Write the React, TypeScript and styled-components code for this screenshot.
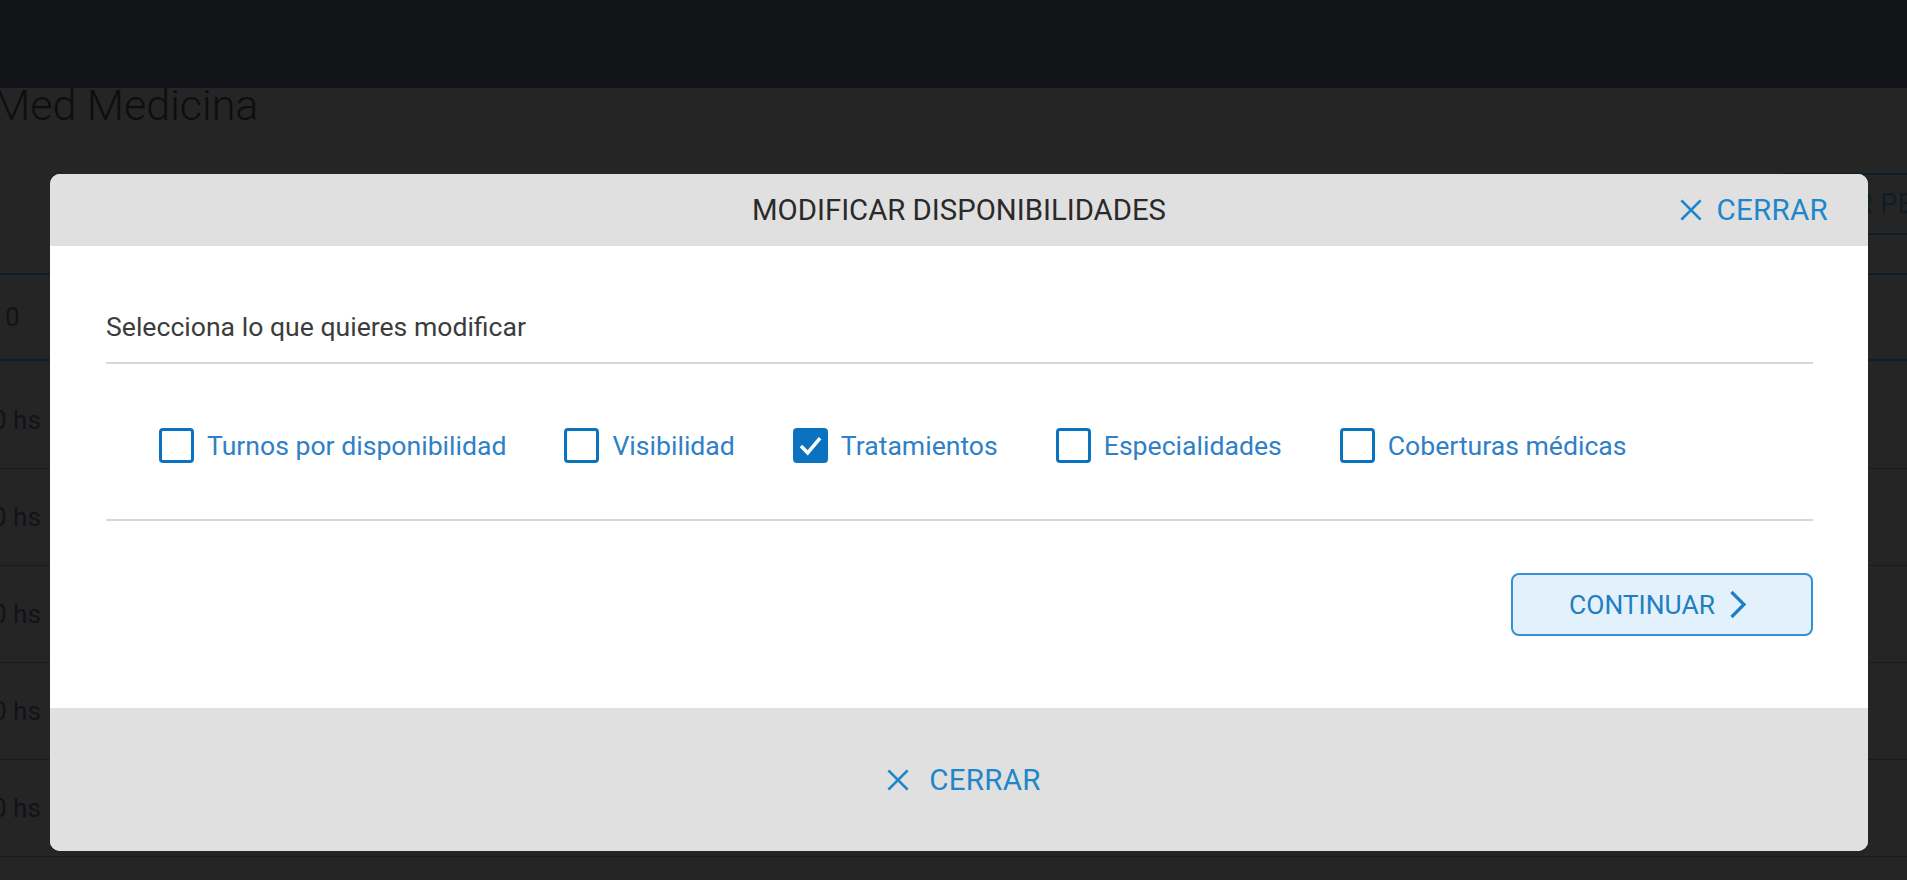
import React from "react";
import styled, { createGlobalStyle } from "styled-components";

const GlobalStyle = createGlobalStyle`
    html, body {
        margin: 0;
        padding: 0;
        background: #252525;
        font-family: Roboto, "Liberation Sans", Arial, sans-serif;
        overflow: hidden;
    }
    * {
        box-sizing: border-box;
    }
`;

const BLUE = "#1f86cc";
const BOX_BLUE = "#0b72bf";

interface Option {
    id: string;
    label: string;
    checked: boolean;
}

const options: Option[] = [
    { id: "turnos", label: "Turnos por disponibilidad", checked: false },
    { id: "visibilidad", label: "Visibilidad", checked: false },
    { id: "tratamientos", label: "Tratamientos", checked: true },
    { id: "especialidades", label: "Especialidades", checked: false },
    { id: "coberturas", label: "Coberturas médicas", checked: false },
];

const rows = ["0 hs", "0 hs", "0 hs", "0 hs", "0 hs"];

const CloseIcon = ({ size }: { size: number }) => (
    <svg width={size} height={size} viewBox="0 0 24 24" fill="none">
        <path d="M1.5 1.5L22.5 22.5M22.5 1.5L1.5 22.5" stroke="currentColor" strokeWidth="3" />
    </svg>
);

const ChevronIcon = () => (
    <svg width="18" height="29" viewBox="0 0 18 29" fill="none">
        <path d="M2.5 2L15 14.5L2.5 27" stroke="currentColor" strokeWidth="3.2" />
    </svg>
);

const CheckIcon = () => (
    <svg width="27" height="27" viewBox="0 0 24 24" fill="none">
        <path d="M3.5 12.5L9.5 18.5L20.5 5.5" stroke="#fff" strokeWidth="3.2" />
    </svg>
);

export default function App() {
    return (
        <>
            <GlobalStyle />
            <Page>
                <TopBar />
                <PageTitle>Med Medicina</PageTitle>
                <Toolbar>
                    <GhostButton>VER PERFIL</GhostButton>
                </Toolbar>
                <Table>
                    <HeaderRow>
                        <Cell>0</Cell>
                    </HeaderRow>
                    {rows.map((r, i) => (
                        <BodyRow key={i} first={i === 0}>
                            <Cell cut>{r}</Cell>
                        </BodyRow>
                    ))}
                </Table>
            </Page>

            <Overlay>
                <Modal>
                    <ModalHeader>
                        <span />
                        <ModalTitle>MODIFICAR DISPONIBILIDADES</ModalTitle>
                        <CloseButton gap={14}>
                            <CloseIcon size={22} />
                            CERRAR
                        </CloseButton>
                    </ModalHeader>

                    <ModalBody>
                        <Intro>Selecciona lo que quieres modificar</Intro>
                        <OptionsRow>
                            {options.map(o => (
                                <OptionLabel key={o.id}>
                                    <Box checked={o.checked}>{o.checked && <CheckIcon />}</Box>
                                    {o.label}
                                </OptionLabel>
                            ))}
                        </OptionsRow>
                        <Actions>
                            <ContinueButton>
                                CONTINUAR
                                <ChevronIcon />
                            </ContinueButton>
                        </Actions>
                    </ModalBody>

                    <ModalFooter>
                        <CloseButton gap={20}>
                            <CloseIcon size={22} />
                            CERRAR
                        </CloseButton>
                    </ModalFooter>
                </Modal>
            </Overlay>
        </>
    );
}

const Page = styled.div`
    width: 1907px;
    height: 880px;
    background: #252525;
    overflow: hidden;
`;

const TopBar = styled.div`
    height: 88px;
    background: #131418;
`;

const PageTitle = styled.h1`
    margin: -4px 0 0 -7px;
    font-size: 43px;
    line-height: 43px;
    font-weight: 300;
    color: #0e0e0e;
`;

const Toolbar = styled.div`
    display: flex;
    justify-content: flex-end;
    margin-top: 46px;
    margin-right: -104px;
`;

const GhostButton = styled.div`
    height: 62px;
    padding: 0 40px;
    display: flex;
    align-items: center;
    border: 2px solid #0f1d27;
    border-radius: 6px;
    font-size: 27px;
    color: #0f1d27;
    letter-spacing: 0.5px;
`;

const Table = styled.div`
    margin-top: 38px;
`;

const HeaderRow = styled.div`
    height: 88px;
    border-top: 2px solid #0f1d27;
    border-bottom: 2px solid #0f1d27;
    display: flex;
    align-items: center;
`;

const BodyRow = styled.div<{ first?: boolean }>`
    height: ${p => (p.first ? 108 : 97)}px;
    padding-top: ${p => (p.first ? 10 : 0)}px;
    border-bottom: 1px solid #1a1a1a;
    display: flex;
    align-items: center;
`;

const Cell = styled.div<{ cut?: boolean }>`
    font-size: 26px;
    color: #101418;
    margin-left: ${p => (p.cut ? -8 : 5)}px;
`;

const Overlay = styled.div`
    position: fixed;
    inset: 0;
    padding: 174px 0 0 50px;
`;

const Modal = styled.div`
    width: 1818px;
    border-radius: 10px;
    overflow: hidden;
    background: #fff;
`;

const ModalHeader = styled.div`
    height: 72px;
    background: #e0e0e0;
    display: grid;
    grid-template-columns: 1fr auto 1fr;
    align-items: center;
    padding-right: 40px;
`;

const ModalTitle = styled.div`
    font-size: 29.3px;
    color: #2a2a2a;
    padding-left: 40px;
`;

const CloseButton = styled.div<{ gap: number }>`
    justify-self: end;
    display: flex;
    align-items: center;
    gap: ${p => p.gap}px;
    font-size: 29.5px;
    color: ${BLUE};
    letter-spacing: 0.3px;
`;

const ModalBody = styled.div`
    height: 462px;
    padding: 0 55px 0 56px;
    background: #fff;
`;

const Intro = styled.div`
    padding: 65px 0 19px;
    font-size: 26.6px;
    line-height: 32px;
    color: #3c3c3c;
    border-bottom: 2px solid #d8d8d8;
`;

const OptionsRow = styled.div`
    display: flex;
    align-items: center;
    gap: 58px;
    padding: 64px 0 56px 53px;
    border-bottom: 2px solid #d8d8d8;
`;

const OptionLabel = styled.label`
    display: flex;
    align-items: center;
    gap: 13px;
    font-size: 26.6px;
    line-height: 35px;
    color: #2f80c6;
`;

const Box = styled.span<{ checked: boolean }>`
    width: 35px;
    height: 35px;
    border: 3px solid ${BOX_BLUE};
    border-radius: 4px;
    background: ${p => (p.checked ? BOX_BLUE : "#fff")};
    display: flex;
    align-items: center;
    justify-content: center;
`;

const Actions = styled.div`
    display: flex;
    justify-content: flex-end;
    padding: 52px 0 0;
`;

const ContinueButton = styled.div`
    width: 302px;
    height: 63px;
    border: 2px solid #3391d4;
    border-radius: 8px;
    background: #e3f1fc;
    display: flex;
    align-items: center;
    justify-content: center;
    gap: 14px;
    font-size: 26.4px;
    color: #1f7fc1;
    padding-right: 8px;
`;

const ModalFooter = styled.div`
    height: 143px;
    background: #e0e0e0;
    display: flex;
    align-items: center;
    justify-content: center;
    padding-left: 10px;
`;
